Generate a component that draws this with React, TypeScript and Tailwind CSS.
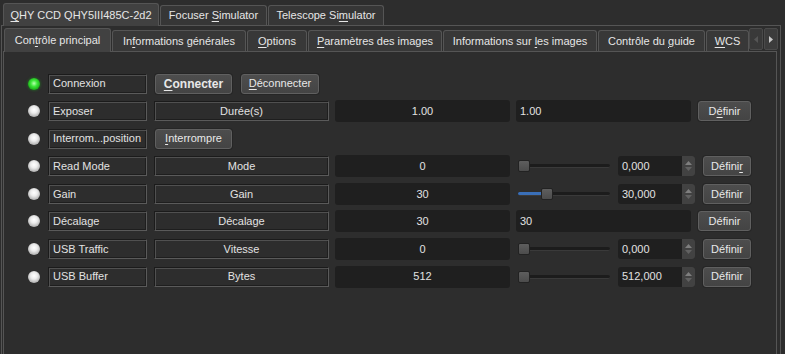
import React from "react";

const FONT = { fontFamily: '"Liberation Sans", Arial, sans-serif' };

function U({ children }: { children: React.ReactNode }) {
  return <span className="underline underline-offset-[2px]">{children}</span>;
}

function Led({ on }: { on?: boolean }) {
  return (
    <div
      className={
        "w-[12px] h-[12px] rounded-full shrink-0 " +
        (on
          ? "bg-[radial-gradient(circle_at_50%_45%,#b8ffb0_0%,#3ee83a_35%,#17a814_75%,#0c5a0b_100%)] shadow-[0_0_3px_#1f7f1f]"
          : "bg-[radial-gradient(circle_at_50%_40%,#ffffff_0%,#ececec_35%,#b0b0b0_75%,#555_100%)]")
      }
    />
  );
}

function Frame({ w, ml, center, children }: { w: number; ml?: number; center?: boolean; children: React.ReactNode }) {
  return (
    <div
      style={{ width: w, marginLeft: ml ?? 0 }}
      className={
        "h-[20px] shrink-0 flex items-center border border-t-[#1b1b1b] border-l-[#1b1b1b] border-b-[#5a5a5a] border-r-[#5a5a5a] shadow-[inset_1px_1px_0_#505050,inset_-1px_-1px_0_#1e1e1e] text-[#e2e2e2] " +
        (center ? "justify-center" : "pl-[4px]")
      }
    >
      {children}
    </div>
  );
}

function Field({ w, ml, center, children }: { w: number; ml?: number; center?: boolean; children: React.ReactNode }) {
  return (
    <div
      style={{ width: w, marginLeft: ml ?? 0 }}
      className={
        "h-[22px] shrink-0 flex items-center rounded-[3px] bg-[#1f1f1f] text-[#e2e2e2] " +
        (center ? "justify-center" : "pl-[4px]")
      }
    >
      {children}
    </div>
  );
}

function Btn({ w, ml, bold, children }: { w: number; ml?: number; bold?: boolean; children: React.ReactNode }) {
  return (
    <div
      style={{ width: w, marginLeft: ml ?? 0 }}
      className={
        "h-[20px] shrink-0 flex items-center justify-center rounded-[3px] border border-[#606060] bg-[linear-gradient(#4d4d4d,#444)] shadow-[0_0_0_1px_#262626] text-[#e8e8e8] " +
        (bold ? "font-bold text-[12px]" : "")
      }
    >
      {children}
    </div>
  );
}

function Slider({ pos }: { pos: number }) {
  return (
    <div className="relative w-[92px] h-[12px] ml-[8px] shrink-0">
      <div className="absolute left-0 right-0 top-[4px] h-[4px] rounded-[2px] bg-[#1c1c1c] border-b border-[#3a3a3a]" />
      {pos > 0 && <div style={{ width: pos + 2 }} className="absolute left-0 top-[4px] h-[3px] bg-[#3a6fb8] rounded-l-[2px]" />}
      <div
        style={{ left: pos }}
        className="absolute top-0 w-[12px] h-[12px] rounded-[2px] bg-[linear-gradient(#5e5e5e,#4c4c4c)] border border-[#222]"
      />
    </div>
  );
}

function Spin({ value }: { value: string }) {
  return (
    <div className="ml-[8px] w-[77px] h-[20px] shrink-0 flex rounded-[3px] bg-[#1f1f1f] overflow-hidden">
      <div className="flex-1 flex items-center pl-[4px] text-[#e2e2e2]">{value}</div>
      <div className="w-[13px] flex flex-col items-center justify-center gap-[2px] bg-[#424242]">
        <svg width="7" height="4" viewBox="0 0 7 4"><path d="M0 4 L3.5 0 L7 4Z" fill="#7e7e7e" /></svg>
        <svg width="7" height="4" viewBox="0 0 7 4"><path d="M0 0 L3.5 4 L7 0Z" fill="#626262" /></svg>
      </div>
    </div>
  );
}

function Row({ on, children }: { on?: boolean; children: React.ReactNode }) {
  return (
    <div className="flex items-center h-[21px] pl-[24px]">
      <Led on={on} />
      {children}
    </div>
  );
}

function OuterTab({ sel, children, w }: { sel?: boolean; children: React.ReactNode; w: number }) {
  return (
    <div
      style={{ width: w }}
      className={
        "flex items-center justify-center border border-[#555] border-b-0 rounded-t-[3px] text-[#e6e6e6] shrink-0 " +
        (sel ? "h-[23px] bg-[#414141] -mb-px z-10" : "h-[20px] bg-[#363636] ml-[1px]")
      }
    >
      {children}
    </div>
  );
}

function InnerTab({ sel, children, w }: { sel?: boolean; children: React.ReactNode; w: number }) {
  return (
    <div
      style={{ width: w }}
      className={
        "flex items-center justify-center border border-[#555] border-b-0 rounded-t-[3px] text-[#e6e6e6] shrink-0 " +
        (sel ? "h-[24px] bg-[#414141] -mb-px z-10" : "h-[21px] bg-[#383838] ml-[1px]")
      }
    >
      {children}
    </div>
  );
}

export default function App() {
  return (
    <div style={FONT} className="w-[785px] h-[354px] bg-[#2d2d2d] text-[11px] overflow-hidden flex flex-col">
      {/* outer tabs */}
      <div className="flex items-end h-[25px] pl-[3px] shrink-0">
        <OuterTab sel w={156}>
          <span><U>Q</U>HY CCD QHY5III485C-2d2</span>
        </OuterTab>
        <OuterTab w={107}>
          <span>Focuser <U>S</U>imulator</span>
        </OuterTab>
        <OuterTab w={116}>
          <span>Telescope Si<U>m</U>ulator</span>
        </OuterTab>
      </div>
      {/* outer pane */}
      <div className="ml-[1px] w-[780px] flex-1 border border-[#555] border-b-0 bg-[#2d2d2d] pl-[1px] pt-[1px] flex flex-col">
        {/* inner tabs */}
        <div className="flex items-end h-[24px] pl-[1px] shrink-0 relative">
          <InnerTab sel w={107}><span>Con<U>t</U>rôle principal</span></InnerTab>
          <InnerTab w={134}><span>In<U>f</U>ormations générales</span></InnerTab>
          <InnerTab w={60}><span><U>O</U>ptions</span></InnerTab>
          <InnerTab w={134}><span><U>P</U>aramètres des images</span></InnerTab>
          <InnerTab w={154}><span>Informations sur <U>l</U>es images</span></InnerTab>
          <InnerTab w={107}><span>Contrôle du <U>g</U>uide</span></InnerTab>
          <InnerTab w={43}><span><U>W</U>CS</span></InnerTab>
          <div className="flex h-[22px] ml-[0px] mb-[1px] self-end">
            <div className="w-[14px] h-full flex items-center justify-center border border-[#4a4a4a] rounded-[2px] bg-[#393939]">
              <svg width="4" height="7" viewBox="0 0 4 7"><path d="M4 0 L0 3.5 L4 7Z" fill="#555" /></svg>
            </div>
            <div className="w-[14px] h-full flex items-center justify-center border border-[#4a4a4a] rounded-[2px] bg-[#3c3c3c] ml-[1px]">
              <svg width="4" height="7" viewBox="0 0 4 7"><path d="M0 0 L4 3.5 L0 7Z" fill="#c8c8c8" /></svg>
            </div>
          </div>
        </div>
        {/* inner pane */}
        <div className="w-[774px] flex-1 border border-[#555] border-b-0 bg-[#2d2d2d] pt-[21px] flex flex-col gap-[6.6px]">
          <Row on>
            <Frame w={99} ml={8}>Connexion</Frame>
            <Btn w={77} ml={8} bold><span><U>C</U>onnecter</span></Btn>
            <Btn w={78} ml={9}><span><U>D</U>éconnecter</span></Btn>
          </Row>
          <Row>
            <Frame w={99} ml={8}>Exposer</Frame>
            <Frame w={175} ml={7} center>Durée(s)</Frame>
            <Field w={175} ml={6} center>1.00</Field>
            <Field w={175} ml={6}>1.00</Field>
            <Btn w={53} ml={7}><span>D<U>é</U>finir</span></Btn>
          </Row>
          <Row>
            <Frame w={99} ml={8}>Interrom...position</Frame>
            <Btn w={77} ml={8}><span><U>I</U>nterrompre</span></Btn>
          </Row>
          <Row>
            <Frame w={99} ml={8}>Read Mode</Frame>
            <Frame w={175} ml={7} center>Mode</Frame>
            <Field w={175} ml={6} center>0</Field>
            <Slider pos={0} />
            <Spin value="0,000" />
            <Btn w={48} ml={8}><span>Défini<U>r</U></span></Btn>
          </Row>
          <Row>
            <Frame w={99} ml={8}>Gain</Frame>
            <Frame w={175} ml={7} center>Gain</Frame>
            <Field w={175} ml={6} center>30</Field>
            <Slider pos={23} />
            <Spin value="30,000" />
            <Btn w={48} ml={8}>Définir</Btn>
          </Row>
          <Row>
            <Frame w={99} ml={8}>Décalage</Frame>
            <Frame w={175} ml={7} center>Décalage</Frame>
            <Field w={175} ml={6} center>30</Field>
            <Field w={175} ml={6}>30</Field>
            <Btn w={53} ml={7}>Définir</Btn>
          </Row>
          <Row>
            <Frame w={99} ml={8}>USB Traffic</Frame>
            <Frame w={175} ml={7} center>Vitesse</Frame>
            <Field w={175} ml={6} center>0</Field>
            <Slider pos={0} />
            <Spin value="0,000" />
            <Btn w={48} ml={8}>Définir</Btn>
          </Row>
          <Row>
            <Frame w={99} ml={8}>USB Buffer</Frame>
            <Frame w={175} ml={7} center>Bytes</Frame>
            <Field w={175} ml={6} center>512</Field>
            <Slider pos={0} />
            <Spin value="512,000" />
            <Btn w={48} ml={8}>Définir</Btn>
          </Row>
        </div>
      </div>
    </div>
  );
}
